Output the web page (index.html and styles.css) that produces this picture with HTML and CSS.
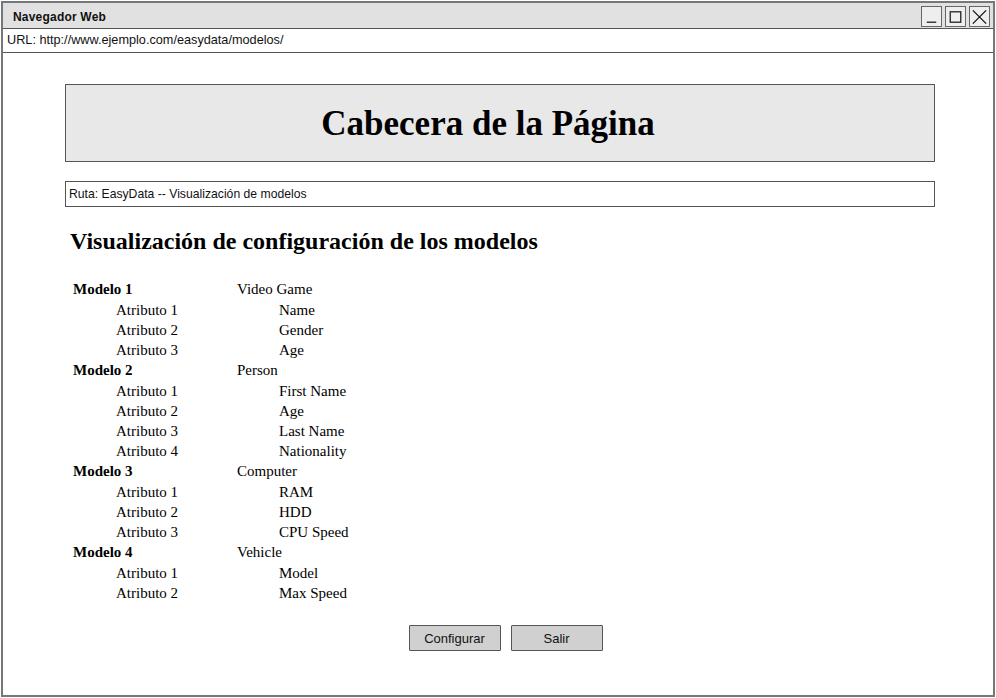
FILE: index.html
```html
<!DOCTYPE html>
<html lang="es">
<head>
<meta charset="utf-8">
<title>Navegador Web</title>
<link rel="stylesheet" href="styles.css">
</head>
<body>
<div class="window">
  <div class="titlebar">
    <span class="title">Navegador Web</span>
    <div class="winbtns">
      <span class="winbtn"><svg width="20" height="20" viewBox="0 0 20 20"><line x1="5" y1="15.5" x2="15" y2="15.5" stroke="#333" stroke-width="1.5"/></svg></span>
      <span class="winbtn"><svg width="20" height="20" viewBox="0 0 20 20"><rect x="4.5" y="4.5" width="11" height="11" fill="none" stroke="#333" stroke-width="1.5"/></svg></span>
      <span class="winbtn"><svg width="20" height="20" viewBox="0 0 20 20"><path d="M3 3 L17 17 M17 3 L3 17" stroke="#111" stroke-width="1.3"/></svg></span>
    </div>
  </div>
  <div class="urlbar">URL: http://www.ejemplo.com/easydata/modelos/</div>
  <div class="content">
    <div class="header"><h1>Cabecera de la Página</h1></div>
    <div class="breadcrumb">Ruta: EasyData -- Visualización de modelos</div>
    <h2>Visualización de configuración de los modelos</h2>
    <div class="models">
      <div class="group">
        <div class="mrow"><span class="mname">Modelo 1</span><span>Video Game</span></div>
        <div class="arow"><span class="aname">Atributo 1</span><span>Name</span></div>
        <div class="arow"><span class="aname">Atributo 2</span><span>Gender</span></div>
        <div class="arow"><span class="aname">Atributo 3</span><span>Age</span></div>
      </div>
      <div class="group">
        <div class="mrow"><span class="mname">Modelo 2</span><span>Person</span></div>
        <div class="arow"><span class="aname">Atributo 1</span><span>First Name</span></div>
        <div class="arow"><span class="aname">Atributo 2</span><span>Age</span></div>
        <div class="arow"><span class="aname">Atributo 3</span><span>Last Name</span></div>
        <div class="arow"><span class="aname">Atributo 4</span><span>Nationality</span></div>
      </div>
      <div class="group">
        <div class="mrow"><span class="mname">Modelo 3</span><span>Computer</span></div>
        <div class="arow"><span class="aname">Atributo 1</span><span>RAM</span></div>
        <div class="arow"><span class="aname">Atributo 2</span><span>HDD</span></div>
        <div class="arow"><span class="aname">Atributo 3</span><span>CPU Speed</span></div>
      </div>
      <div class="group">
        <div class="mrow"><span class="mname">Modelo 4</span><span>Vehicle</span></div>
        <div class="arow"><span class="aname">Atributo 1</span><span>Model</span></div>
        <div class="arow"><span class="aname">Atributo 2</span><span>Max Speed</span></div>
      </div>
    </div>
    <div class="actions">
      <button class="btn">Configurar</button>
      <button class="btn">Salir</button>
    </div>
  </div>
</div>
</body>
</html>
```
FILE: styles.css
```css
* { box-sizing: border-box; }
html, body { margin: 0; padding: 0; background: #fff; }
body { width: 996px; height: 698px; overflow: hidden; }

.window {
  margin: 1px 0 0 1px;
  width: 994px;
  height: 696px;
  border: 2px solid #777;
  background: #fff;
  display: flex;
  flex-direction: column;
}

.titlebar {
  height: 26px;
  background: #e1e1e1;
  border-bottom: 1px solid #555;
  display: flex;
  align-items: center;
  justify-content: space-between;
  padding: 0 3px 0 10px;
}
.title {
  font-family: "Liberation Sans", Arial, sans-serif;
  font-weight: bold;
  font-size: 12px;
  letter-spacing: 0.2px;
  color: #111;
  padding-top: 3px;
}
.winbtns { display: flex; gap: 3px; padding-top: 2px; }
.winbtn {
  width: 21px;
  height: 21px;
  border: 1px solid #666;
  background: #eee;
  display: flex;
  align-items: center;
  justify-content: center;
}

.urlbar {
  height: 24px;
  border-bottom: 1px solid #555;
  font-family: "Liberation Sans", Arial, sans-serif;
  font-size: 12.7px;
  color: #111;
  padding: 4px 0 0 4px;
}

.content {
  flex: 1;
  padding: 31px 58px 0 62px;
  display: flex;
  flex-direction: column;
}

.header {
  height: 78px;
  background: #e8e8e8;
  border: 1px solid #555;
  display: flex;
  align-items: center;
  justify-content: center;
  padding-right: 24px;
}
.header h1 {
  margin: 0;
  font-family: "Liberation Serif", "Times New Roman", serif;
  font-weight: bold;
  font-size: 35px;
  color: #000;
  padding-top: 2px;
}

.breadcrumb {
  margin-top: 19px;
  height: 26px;
  border: 1px solid #555;
  font-family: "Liberation Sans", Arial, sans-serif;
  font-size: 12.2px;
  color: #111;
  padding: 5px 0 0 3px;
}

h2 {
  margin: 21px 0 0 5px;
  font-family: "Liberation Serif", "Times New Roman", serif;
  font-weight: bold;
  font-size: 24px;
  line-height: 26px;
  color: #000;
}

.models {
  margin-top: 25px;
  padding-left: 8px;
  font-family: "Liberation Serif", "Times New Roman", serif;
  font-size: 15px;
  color: #000;
}
.mrow, .arow { display: flex; line-height: 20px; height: 20px; }
.mrow { height: 21px; }
.mname { width: 164px; font-weight: bold; }
.arow { padding-left: 43px; }
.aname { width: 163px; }

.actions {
  margin-top: 22px;
  display: flex;
  justify-content: center;
  gap: 10px;
  padding-left: 11px;
}
.btn {
  width: 92px;
  height: 26px;
  background: #d0d0d0;
  border: 1px solid #555;
  border-radius: 1px;
  font-family: "Liberation Sans", Arial, sans-serif;
  font-size: 13px;
  color: #111;
  padding: 0;
}
```
